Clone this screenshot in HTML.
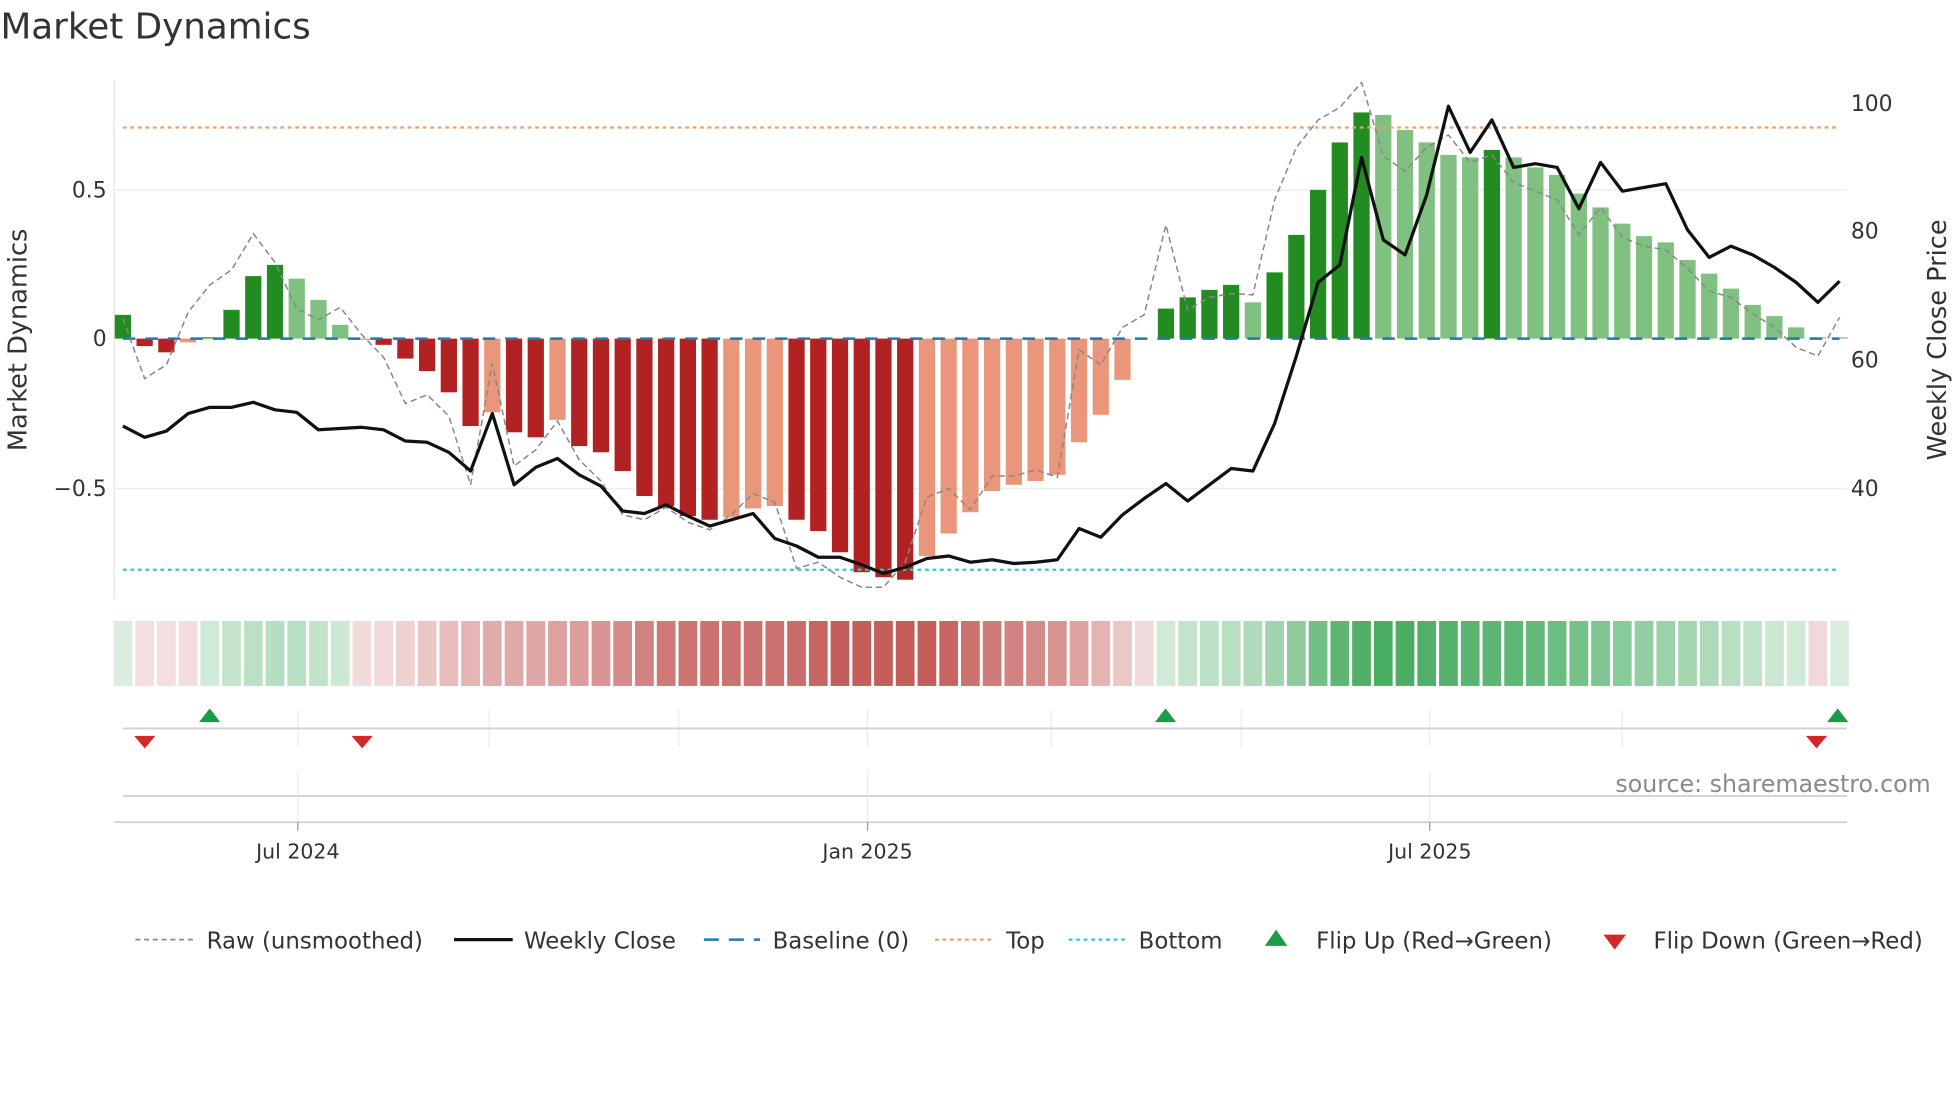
<!DOCTYPE html>
<html><head><meta charset="utf-8"><style>
html,body{margin:0;padding:0;background:#fff;width:1960px;height:1102px;overflow:hidden}
svg{display:block}
text{font-family:"DejaVu Sans","Liberation Sans",sans-serif;fill:#333}
</style></head><body>
<svg id="s" width="1960" height="1102" viewBox="0 0 1568 882" xmlns="http://www.w3.org/2000/svg">
<text x="0" y="31" font-size="28.6">Market Dynamics</text>
<line x1="91" y1="64" x2="91" y2="480" stroke="#e6e6e6" stroke-width="1"/>
<line x1="91" y1="152" x2="1478" y2="152" stroke="#eeeeee" stroke-width="1.2"/>
<line x1="91" y1="391" x2="1478" y2="391" stroke="#eeeeee" stroke-width="1.2"/>
<text x="85" y="158" font-size="17.5" text-anchor="end">0.5</text>
<text x="85" y="277" font-size="17.5" text-anchor="end">0</text>
<text x="85" y="397" font-size="17.5" text-anchor="end">−0.5</text>
<text x="1481" y="89" font-size="17.5">100</text>
<text x="1481" y="191" font-size="17.5">80</text>
<text x="1481" y="294" font-size="17.5">60</text>
<text x="1481" y="397" font-size="17.5">40</text>
<text transform="translate(21,272) rotate(-90)" font-size="20.5" text-anchor="middle">Market Dynamics</text>
<text transform="translate(1557,272) rotate(-90)" font-size="20.5" text-anchor="middle">Weekly Close Price</text>
<g id="bars"></g>
<line x1="98" y1="102" x2="1472" y2="102" stroke="#f0a060" stroke-width="1.8" stroke-dasharray="3,3"/>
<line x1="98" y1="456" x2="1472" y2="456" stroke="#30c8d8" stroke-width="1.8" stroke-dasharray="3,3"/>
<line x1="98" y1="271" x2="1472" y2="271" stroke="#1f77b4" stroke-width="2" stroke-dasharray="10,8"/>
<polyline id="raw" fill="none" stroke="#888" stroke-width="1.2" stroke-dasharray="5,3"/>
<polyline id="close" fill="none" stroke="#111" stroke-width="2.6" stroke-linejoin="round"/>
<g id="heat"></g>
<g stroke="#eaecef" stroke-width="1">
<line x1="238" y1="568" x2="238" y2="598"/><line x1="391" y1="568" x2="391" y2="598"/><line x1="543" y1="568" x2="543" y2="598"/><line x1="694" y1="568" x2="694" y2="598"/><line x1="841" y1="568" x2="841" y2="598"/><line x1="993" y1="568" x2="993" y2="598"/><line x1="1144" y1="568" x2="1144" y2="598"/><line x1="1298" y1="568" x2="1298" y2="598"/>
<line x1="238" y1="617" x2="238" y2="657"/><line x1="694" y1="617" x2="694" y2="657"/><line x1="1144" y1="617" x2="1144" y2="657"/>
</g>
<line x1="98" y1="583" x2="1478" y2="583" stroke="#d0d2d6" stroke-width="1.5"/>
<line x1="98" y1="637" x2="1478" y2="637" stroke="#d0d2d6" stroke-width="1.5"/>
<line x1="91" y1="658" x2="1478" y2="658" stroke="#d0d2d6" stroke-width="1.5"/>
<g stroke="#999" stroke-width="1"><line x1="238" y1="658" x2="238" y2="665"/><line x1="694" y1="658" x2="694" y2="665"/><line x1="1144" y1="658" x2="1144" y2="665"/></g>
<g fill="#1a9c48"><polygon points="159,578 176,578 167.5,567"/><polygon points="924,578 941,578 932.5,567"/><polygon points="1462,578 1479,578 1470.5,567"/></g>
<g fill="#d62728"><polygon points="107,589 124,589 115.5,599"/><polygon points="281,589 298,589 289.5,599"/><polygon points="1445,589 1462,589 1453.5,599"/></g>
<text x="1545" y="634" font-size="19" text-anchor="end" style="fill:#8a8a8a">source: sharemaestro.com</text>
<text x="238" y="687" font-size="16.4" text-anchor="middle">Jul 2024</text>
<text x="694" y="687" font-size="16.4" text-anchor="middle">Jan 2025</text>
<text x="1144" y="687" font-size="16.4" text-anchor="middle">Jul 2025</text>
<g font-size="18.3">
<line x1="108" y1="752" x2="154" y2="752" stroke="#888" stroke-width="1.4" stroke-dasharray="4,3"/>
<text x="165" y="759">Raw (unsmoothed)</text>
<line x1="363" y1="752" x2="410" y2="752" stroke="#111" stroke-width="2.6"/>
<text x="419" y="759">Weekly Close</text>
<line x1="563" y1="752" x2="608" y2="752" stroke="#1f77b4" stroke-width="2" stroke-dasharray="12,8"/>
<text x="618" y="759">Baseline (0)</text>
<line x1="748" y1="752" x2="794" y2="752" stroke="#f0a060" stroke-width="1.8" stroke-dasharray="3,3"/>
<text x="805" y="759">Top</text>
<line x1="855" y1="752" x2="900" y2="752" stroke="#30c8d8" stroke-width="1.8" stroke-dasharray="3,3"/>
<text x="911" y="759">Bottom</text>
<polygon points="1012,757 1030,757 1021,744" fill="#1a9c48"/>
<text x="1053" y="759">Flip Up (Red→Green)</text>
<polygon points="1283,748 1301,748 1292,760" fill="#d62728"/>
<text x="1323" y="759">Flip Down (Green→Red)</text>
</g>
</svg>
<script>
var NS="http://www.w3.org/2000/svg";
var D="#228b22",L="#80c080",R="#b22222",S="#e9967a";
var b=[[252,D],[277,R],[282,R],[274,S],[270,D],[248,D],[221,D],[212,D],[223,L],[240,L],[260,L],[272,S],[276,R],[287,R],[297,R],[314,R],[341,R],[330,S],[346,R],[350,R],[336,S],[357,R],[362,R],[377,R],[397,R],[405,R],[413,R],[416,R],[414,S],[407,S],[405,S],[416,R],[425,R],[442,R],[458,R],[462,R],[464,R],[445,S],[427,S],[410,S],[393,S],[388,S],[385,S],[380,S],[354,S],[332,S],[304,S],[271,S],[247,D],[238,D],[232,D],[228,D],[242,L],[218,D],[188,D],[152,D],[114,D],[90,D],[92,L],[104,L],[114,L],[124,L],[126,L],[120,D],[126,L],[134,L],[140,L],[155,L],[166,L],[179,L],[189,L],[194,L],[208,L],[219,L],[231,L],[244,L],[253,L],[262,L],[270,L],[270,L]];
var x0=98,dx=(1472-98)/79,g=document.getElementById("bars"),h=document.getElementById("heat");
function rect(p,x,y,w,hh,f,o){var r=document.createElementNS(NS,"rect");r.setAttribute("x",x);r.setAttribute("y",y);r.setAttribute("width",w);r.setAttribute("height",hh);r.setAttribute("fill",f);if(o!==undefined)r.setAttribute("fill-opacity",o);p.appendChild(r);}
var vals=b.map(function(a){return (271-a[0])/238;});
for(var i=0;i<b.length;i++){var x=x0+i*dx,t=b[i][0];
 if(t<271)rect(g,x-6.5,t,13,271-t,b[i][1]);else if(t>271)rect(g,x-6.5,271,13,t-271,b[i][1]);
 var s=0,n=0;for(var k=Math.max(0,i-2);k<=Math.min(b.length-1,i+2);k++){s+=vals[k];n++;}var v=s/n;
 var pos=b[i][1]==D||b[i][1]==L;if(i==78)pos=false;
 var a=Math.min(1,0.2+0.8*Math.abs(v)/0.7);
 rect(h,x-7.5,497,15,52,pos?"#3aa655":"#c0504d",a*0.92);
}
var c=[341,350,345,331,326,326,322,328,330,344,343,342,344,353,354,362,377,331,388,374,367,380,389,409,411,404,413,421,416,411,431,437,446,446,452,459,454,447,445,450,448,451,450,448,423,430,412,399,387,401,388,375,377,339,285,226,212,126,192,204,156,85,122,96,134,131,134,167,130,153,150,147,184,206,197,204,214,226,242,225];
var r=[255,303,292,250,228,216,187,210,247,256,246,268,286,323,316,333,388,291,373,360,337,368,385,412,416,406,418,424,412,395,402,455,450,462,470,470,450,398,391,408,381,381,376,382,280,292,262,252,180,248,238,235,236,160,118,96,86,66,125,137,118,108,130,124,146,153,160,188,166,190,197,200,215,233,238,251,262,278,285,254];
function pts(a){return a.map(function(y,i){return (x0+i*dx).toFixed(1)+","+y;}).join(" ");}
document.getElementById("close").setAttribute("points",pts(c));
document.getElementById("raw").setAttribute("points",pts(r));
</script>
</body></html>
